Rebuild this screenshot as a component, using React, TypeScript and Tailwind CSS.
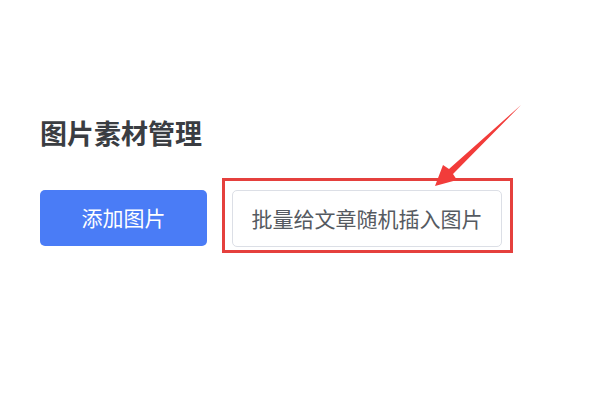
export default function App() {
  return (
    <div className="relative h-[400px] w-[600px] overflow-hidden bg-white font-['Noto_Sans_CJK_SC',sans-serif]">
      <div className="pl-10 pt-[119px]">
        <h1 className="text-[27px] font-bold leading-[27px] text-[#3a3d42]">图片素材管理</h1>

        <div className="mt-[44px] flex items-start gap-[25px]">
          <button className="flex h-[56px] w-[167px] items-center justify-center rounded-[5px] bg-[#4a7cf6] text-[21px] text-white">
            添加图片
          </button>

          <div className="relative">
            <button className="flex h-[57px] w-[270px] items-center justify-center rounded-[5px] border border-[#dcdfe6] bg-white text-[21px] text-[#555a61]">
              批量给文章随机插入图片
            </button>
            {/* annotation box */}
            <div className="pointer-events-none absolute bottom-[-6px] left-[-10px] right-[-11px] top-[-12px] border-[3px] border-[#e5403d]" />
          </div>
        </div>
      </div>

      {/* annotation arrow */}
      <svg className="pointer-events-none absolute inset-0" width="600" height="400" viewBox="0 0 600 400">
        <polygon
          points="435,186 443,165 449,169 521,105 453,174 457,180"
          fill="#f23c3a"
        />
      </svg>
    </div>
  );
}
